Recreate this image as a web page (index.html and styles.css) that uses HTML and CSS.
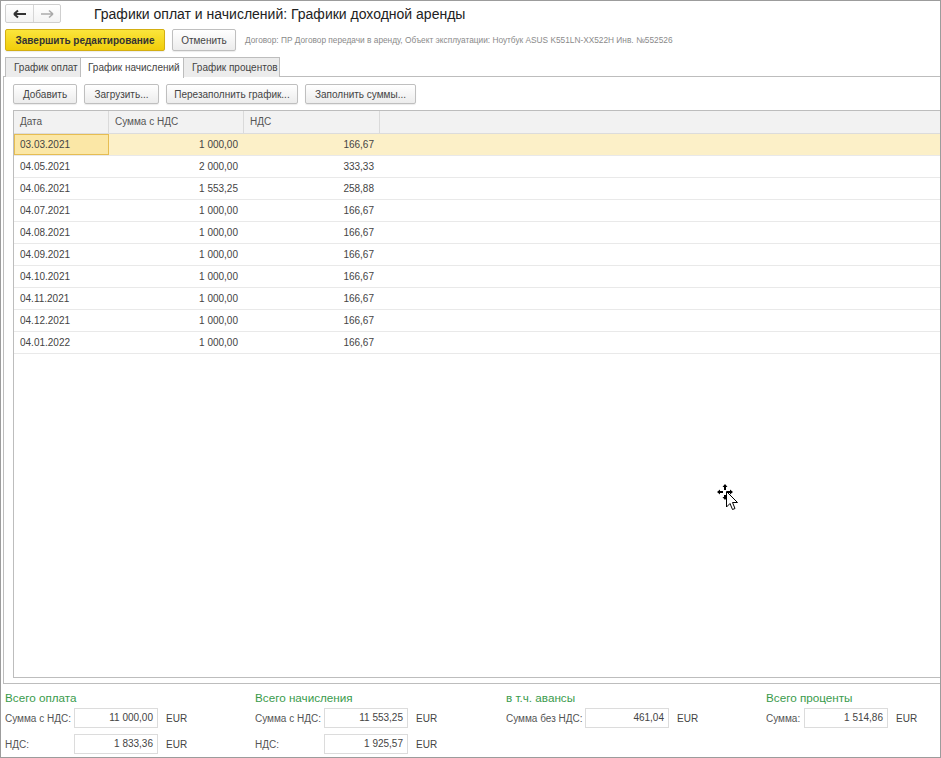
FILE: index.html
```html
<!DOCTYPE html>
<html lang="ru">
<head>
<meta charset="utf-8">
<link rel="stylesheet" href="styles.css">
</head>
<body>
<div class="window">
  <div class="titlebar">
    <div class="nav">
      <span class="nav-btn"><svg width="14" height="10" viewBox="0 0 14 10"><path d="M1 5H13M1 5L5 1.5M1 5L5 8.5" stroke="#333" stroke-width="2" fill="none"/></svg></span>
      <span class="nav-btn"><svg width="14" height="10" viewBox="0 0 14 10"><path d="M1 5H13M13 5L9 1.5M13 5L9 8.5" stroke="#aaa" stroke-width="1.6" fill="none"/></svg></span>
    </div>
    <div class="title">Графики оплат и начислений: Графики доходной аренды</div>
  </div>
  <div class="commandbar">
    <button class="btn btn-primary">Завершить редактирование</button>
    <button class="btn btn-cancel">Отменить</button>
    <span class="info">Договор: ПР Договор передачи в аренду, Объект эксплуатации: Ноутбук ASUS K551LN-XX522H Инв. №552526</span>
  </div>
  <div class="tabs">
    <div class="tab t1">График оплат</div>
    <div class="tab t2 active">График начислений</div>
    <div class="tab t3">График процентов</div>
  </div>
  <div class="panel">
    <div class="toolbar">
      <button class="btn btn-add">Добавить</button>
      <button class="btn btn-load">Загрузить...</button>
      <button class="btn btn-refill">Перезаполнить график...</button>
      <button class="btn btn-fill">Заполнить суммы...</button>
    </div>
    <div class="grid">
      <div class="row head">
        <div class="cell">Дата</div>
        <div class="cell">Сумма с НДС</div>
        <div class="cell">НДС</div>
        <div class="cell filler"></div>
      </div>
      <div class="row selected">
        <div class="cell date current">03.03.2021</div>
        <div class="cell num">1 000,00</div>
        <div class="cell num">166,67</div>
        <div class="cell filler"></div>
      </div>
      <div class="row"><div class="cell date">04.05.2021</div><div class="cell num">2 000,00</div><div class="cell num">333,33</div><div class="cell filler"></div></div>
      <div class="row"><div class="cell date">04.06.2021</div><div class="cell num">1 553,25</div><div class="cell num">258,88</div><div class="cell filler"></div></div>
      <div class="row"><div class="cell date">04.07.2021</div><div class="cell num">1 000,00</div><div class="cell num">166,67</div><div class="cell filler"></div></div>
      <div class="row"><div class="cell date">04.08.2021</div><div class="cell num">1 000,00</div><div class="cell num">166,67</div><div class="cell filler"></div></div>
      <div class="row"><div class="cell date">04.09.2021</div><div class="cell num">1 000,00</div><div class="cell num">166,67</div><div class="cell filler"></div></div>
      <div class="row"><div class="cell date">04.10.2021</div><div class="cell num">1 000,00</div><div class="cell num">166,67</div><div class="cell filler"></div></div>
      <div class="row"><div class="cell date">04.11.2021</div><div class="cell num">1 000,00</div><div class="cell num">166,67</div><div class="cell filler"></div></div>
      <div class="row"><div class="cell date">04.12.2021</div><div class="cell num">1 000,00</div><div class="cell num">166,67</div><div class="cell filler"></div></div>
      <div class="row"><div class="cell date">04.01.2022</div><div class="cell num">1 000,00</div><div class="cell num">166,67</div><div class="cell filler"></div></div>
    </div>
  </div>
  <div class="footer">
    <div class="group g1">
      <div class="group-title">Всего оплата</div>
      <div class="field"><span class="label">Сумма с НДС:</span><span class="input">11 000,00</span><span class="cur">EUR</span></div>
      <div class="field f2"><span class="label">НДС:</span><span class="input">1 833,36</span><span class="cur">EUR</span></div>
    </div>
    <div class="group g2">
      <div class="group-title">Всего начисления</div>
      <div class="field"><span class="label">Сумма с НДС:</span><span class="input">11 553,25</span><span class="cur">EUR</span></div>
      <div class="field f2"><span class="label">НДС:</span><span class="input">1 925,57</span><span class="cur">EUR</span></div>
    </div>
    <div class="group g3">
      <div class="group-title">в т.ч. авансы</div>
      <div class="field"><span class="label">Сумма без НДС:</span><span class="input">461,04</span><span class="cur">EUR</span></div>
    </div>
    <div class="group g4">
      <div class="group-title">Всего проценты</div>
      <div class="field"><span class="label">Сумма:</span><span class="input">1 514,86</span><span class="cur">EUR</span></div>
    </div>
  </div>
  <svg class="cursor" width="26" height="30" viewBox="0 0 26 30">
    <g fill="#000">
      <path d="M8 0L10.5 3H9V6H7V3H5.5Z"/>
      <path d="M0 8L3 5.5V7H6V9H3V10.5Z"/>
      <path d="M16 8L13 5.5V7H10V9H13V10.5Z"/>
      <path d="M8 16L10.5 13H9V11H7V13H5.5Z"/>
    </g>
    <path d="M9.5 7.5V23L13 19.5L15.5 25.5L18 24.5L15.5 18.5H20.5Z" fill="#fff" stroke="#000" stroke-width="1"/>
  </svg>
</div>
</body>
</html>
```
FILE: styles.css
```css
* { box-sizing: border-box; }
html, body { margin: 0; padding: 0; background: #fff; }
body { font-family: "Liberation Sans", Arial, sans-serif; font-size: 10px; color: #333; }

.window {
  position: relative;
  width: 941px;
  height: 758px;
  border: 1px solid #9c9c9c;
  display: flex;
  flex-direction: column;
  overflow: hidden;
}

.titlebar { display: flex; align-items: center; margin-top: 3px; height: 19px; padding-left: 4px; }
.nav { display: flex; height: 19px; border: 1px solid #cfcfcf; border-radius: 2px; background: linear-gradient(#fff, #f3f3f3); }
.nav-btn { width: 27px; display: flex; align-items: center; justify-content: center; }
.nav-btn + .nav-btn { border-left: 1px solid #d6d6d6; width: 27px; }
.title { margin-left: 33px; font-size: 14px; color: #222; line-height: 19px; position: relative; top: 1px; white-space: nowrap; }

.commandbar { display: flex; align-items: center; margin-top: 6px; height: 22px; padding-left: 4px; }
.btn {
  font-family: "Liberation Sans", Arial, sans-serif;
  font-size: 10px;
  color: #444;
  height: 20px;
  padding: 0;
  border: 1px solid #bfbfbf;
  border-radius: 2px;
  background: linear-gradient(#ffffff, #ececec);
  box-shadow: 0 1px 1px rgba(0,0,0,0.08);
  white-space: nowrap;
}
.btn-primary {
  width: 160px; height: 22px;
  font-weight: bold; color: #333;
  border-color: #d3ae12;
  background: linear-gradient(#fbe53c, #f1cd0a);
}
.btn-cancel { width: 64px; height: 22px; margin-left: 7px; }
.info { margin-left: 9px; font-size: 8.3px; color: #8a8a8a; white-space: nowrap; }

.tabs { display: flex; margin-top: 6px; height: 20px; padding-left: 4px; margin-bottom: -1px; position: relative; z-index: 1; }
.tab {
  height: 20px; line-height: 19px;
  padding: 0 0 0 8px;
  border: 1px solid #bdbdbd;
  border-bottom: none;
  background: #ececec;
  color: #444;
  font-size: 10px;
  white-space: nowrap;
}
.tab + .tab { border-left: none; }
.t1 { width: 76px; }
.t2 { width: 103px; }
.t3 { width: 96px; }
.tab.active { background: #fff; height: 21px; padding-left: 7px; }

.panel {
  flex: 1;
  margin-left: 2px;
  border-top: 1px solid #bdbdbd;
  border-left: 1px solid #bdbdbd;
  border-bottom: 1px solid #bdbdbd;
  padding: 7px 0 5px 9px;
  display: flex;
  flex-direction: column;
}
.toolbar { display: flex; gap: 7px; height: 20px; }
.btn-add { width: 64px; }
.btn-load { width: 75px; }
.btn-refill { width: 132px; }
.btn-fill { width: 111px; }

.grid {
  flex: 1;
  margin-top: 6px;
  border-top: 1px solid #bdbdbd;
  border-left: 1px solid #bdbdbd;
  border-bottom: 1px solid #bdbdbd;
}
.row {
  display: grid;
  grid-template-columns: 95px 135px 136px 1fr;
  height: 22px;
  border-bottom: 1px solid #e9e9e9;
}
.row.head { height: 23px; background: #f2f2f2; border-bottom: 1px solid #dcdcdc; }
.head .cell { color: #555; border-right: 1px solid #dadada; line-height: 22px; padding-left: 6px; }
.head .cell.filler { border-right: none; }
.cell { line-height: 21px; color: #444; white-space: nowrap; }
.cell.date { padding-left: 6px; }
.cell.num { text-align: right; padding-right: 6px; }
.row.selected { background: #fcf0c8; }
.cell.current { background: #fbe7a6; border: 1px solid #e6bd52; line-height: 19px; padding-left: 5px; }

.footer { height: 73px; display: flex; padding: 7px 0 0 4px; }
.group { display: flex; flex-direction: column; }
.g1 { width: 250px; }
.g2 { width: 251px; }
.g3 { width: 260px; }
.group-title { color: #3a9b4c; font-size: 11.7px; line-height: 14px; height: 14px; white-space: nowrap; }
.field { display: flex; align-items: center; margin-top: 3px; height: 20px; }
.field.f2 { margin-top: 6px; }
.label { color: #555; font-size: 10px; white-space: nowrap; }
.g1 .label, .g2 .label { width: 69px; }
.g3 .label { width: 79px; }
.g4 .label { width: 38px; }
.input {
  width: 84px; height: 20px;
  border: 1px solid #dcdcdc;
  text-align: right; padding-right: 4px;
  line-height: 18px; color: #444;
}
.cur { margin-left: 8px; color: #444; }

.cursor { position: absolute; left: 716px; top: 483px; }
```
